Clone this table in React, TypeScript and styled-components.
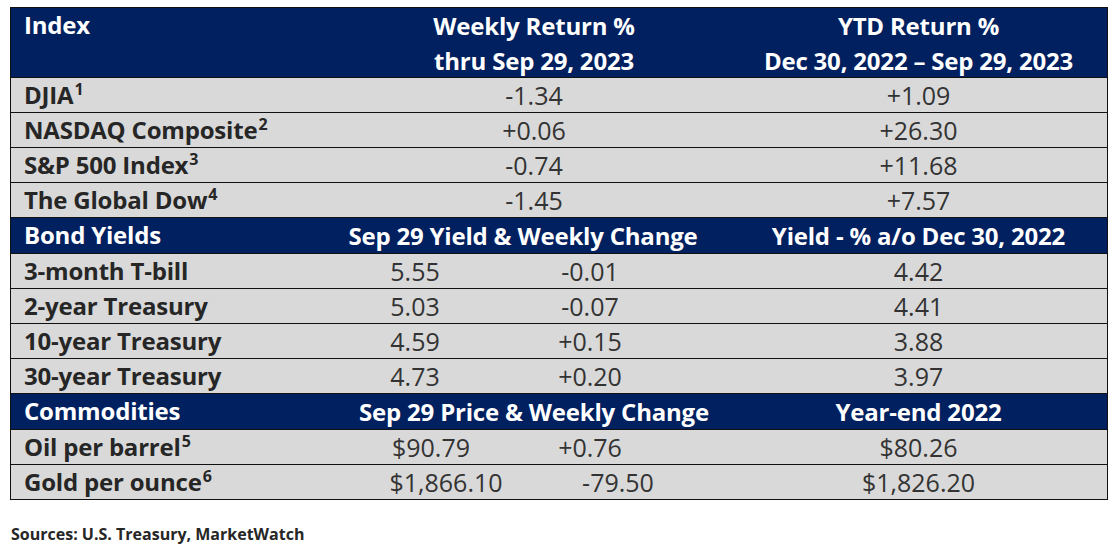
import React from 'react';
import styled, { createGlobalStyle } from 'styled-components';

const GlobalStyle = createGlobalStyle`
  body {
    margin: 0;
    background: #ffffff;
    font-family: "Open Sans", Lato, sans-serif;
  }
`;

const Page = styled.div`
  width: 1113px;
  height: 546px;
  padding: 7px 0 0 10px;
  box-sizing: border-box;
`;

const Table = styled.div`
  width: 1098px;
  border: 1px solid #111111;
  border-bottom: none;
  box-sizing: border-box;
`;

// label | sub 1 | sub 2 | spare | right column
const Row = styled.div<{ $head?: boolean; $h: number }>`
  display: grid;
  grid-template-columns: 327px 154px 196px 42px 377px;
  height: ${p => p.$h}px;
  box-sizing: border-box;
  border-bottom: 1px solid #111111;
  background: ${p => (p.$head ? '#002060' : '#d9d9d9')};
  color: ${p => (p.$head ? '#ffffff' : '#262626')};
  font-size: 24px;
  line-height: 34px;
`;

const Label = styled.div`
  padding-left: 13px;
  font-weight: 700;
  white-space: nowrap;
  letter-spacing: -0.2px;
`;

const Cell = styled.div<{ $span?: number; $pad?: number }>`
  grid-column: span ${p => p.$span || 1};
  display: flex;
  justify-content: center;
  text-align: center;
  white-space: nowrap;
  font-size: 25px;
  font-weight: 400;
  color: #333333;
  padding-left: ${p => (p.$pad && p.$pad > 0 ? p.$pad : 0)}px;
  padding-right: ${p => (p.$pad && p.$pad < 0 ? -p.$pad : 0)}px;
`;

const HeadCell = styled(Cell)`
  display: block;
  font-size: 24px;
  font-weight: 700;
  color: #ffffff;
  line-height: 35px;
  letter-spacing: -0.2px;
`;

const Sup = styled.sup`
  font-size: 16px;
  line-height: 0;
  vertical-align: 9px;
  margin-left: 1px;
`;

const Sources = styled.div`
  margin-top: 23px;
  margin-left: 1px;
  font-size: 16px;
  font-weight: 700;
  color: #262626;
`;

const indexRows = [
  { name: 'DJIA', note: '1', week: '-1.34', ytd: '+1.09' },
  { name: 'NASDAQ Composite', note: '2', week: '+0.06', ytd: '+26.30' },
  { name: 'S&P 500 Index', note: '3', week: '-0.74', ytd: '+11.68' },
  { name: 'The Global Dow', note: '4', week: '-1.45', ytd: '+7.57' },
];

const bondRows = [
  { name: '3-month T-bill', a: '5.55', b: '-0.01', c: '4.42' },
  { name: '2-year Treasury', a: '5.03', b: '-0.07', c: '4.41' },
  { name: '10-year Treasury', a: '4.59', b: '+0.15', c: '3.88' },
  { name: '30-year Treasury', a: '4.73', b: '+0.20', c: '3.97' },
];

const commodityRows = [
  { name: 'Oil per barrel', note: '5', a: '$90.79', b: '+0.76', c: '$80.26', pa: 32, pb: 0 },
  { name: 'Gold per ounce', note: '6', a: '$1,866.10', b: '-79.50', c: '$1,826.20', pa: 62, pb: 56 },
];

export default function App() {
  return (
    <Page>
      <GlobalStyle />
      <Table>
        <Row $head $h={70}>
          <Label>Index</Label>
          <HeadCell $span={3}>
            Weekly Return %<br />thru Sep 29, 2023
          </HeadCell>
          <HeadCell>
            YTD Return %<br />Dec 30, 2022 – Sep 29, 2023
          </HeadCell>
        </Row>
        {indexRows.map(r => (
          <Row key={r.name} $h={35}>
            <Label>
              {r.name}
              <Sup>{r.note}</Sup>
            </Label>
            <Cell $span={3}>{r.week}</Cell>
            <Cell>{r.ytd}</Cell>
          </Row>
        ))}
        <Row $head $h={36}>
          <Label>Bond Yields</Label>
          <HeadCell $span={3} $pad={-22}>
            Sep 29 Yield &amp; Weekly Change
          </HeadCell>
          <HeadCell>Yield - % a/o Dec 30, 2022</HeadCell>
        </Row>
        {bondRows.map(r => (
          <Row key={r.name} $h={35}>
            <Label>{r.name}</Label>
            <Cell>{r.a}</Cell>
            <Cell>{r.b}</Cell>
            <Cell />
            <Cell>{r.c}</Cell>
          </Row>
        ))}
        <Row $head $h={36}>
          <Label>Commodities</Label>
          <HeadCell $span={3}>Sep 29 Price &amp; Weekly Change</HeadCell>
          <HeadCell>Year-end 2022</HeadCell>
        </Row>
        {commodityRows.map(r => (
          <Row key={r.name} $h={35}>
            <Label>
              {r.name}
              <Sup>{r.note}</Sup>
            </Label>
            <Cell $pad={r.pa}>{r.a}</Cell>
            <Cell $pad={r.pb}>{r.b}</Cell>
            <Cell />
            <Cell>{r.c}</Cell>
          </Row>
        ))}
      </Table>
      <Sources>Sources: U.S. Treasury, MarketWatch</Sources>
    </Page>
  );
}
